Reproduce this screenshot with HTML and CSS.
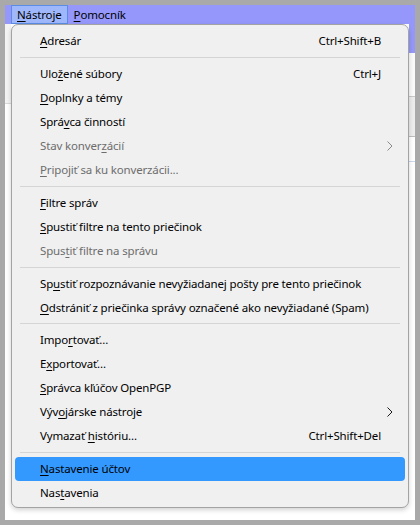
FILE: index.html
```html
<!DOCTYPE html>
<html lang="sk">
<head>
<meta charset="utf-8">
<title>Nástroje</title>
<link rel="stylesheet" href="styles.css">
</head>
<body>
<div class="window">
  <div class="menubar">
    <span class="mb-item open"><u>N</u>ástroje</span>
    <span class="mb-item"><u>P</u>omocník</span>
  </div>
  <div class="workspace">
    <div class="left-pane">
      <div class="lp-top"></div>
      <div class="lp-rest"></div>
    </div>
    <div class="right-pane">
      <div class="rp-head"></div>
      <div class="rp-row"></div>
      <div class="rp-box"></div>
      <div class="rp-line"></div>
      <div class="rp-rest"></div>
    </div>
  </div>

  <div class="menu">
    <div class="item"><span class="label"><u>A</u>dresár</span><span class="accel">Ctrl+Shift+B</span></div>
    <div class="sep"></div>
    <div class="item"><span class="label">Ulo<u>ž</u>ené súbory</span><span class="accel">Ctrl+J</span></div>
    <div class="item"><span class="label"><u>D</u>oplnky a témy</span></div>
    <div class="item"><span class="label">Sprá<u>v</u>ca činností</span></div>
    <div class="item disabled"><span class="label">Stav konver<u>z</u>ácií</span><svg class="arrow" width="6" height="10" viewBox="0 0 6 10"><polyline points="0.5,0.5 5,5 0.5,9.5" /></svg></div>
    <div class="item disabled"><span class="label"><u>P</u>ripojiť sa ku konverzácii...</span></div>
    <div class="sep"></div>
    <div class="item"><span class="label"><u>F</u>iltre správ</span></div>
    <div class="item"><span class="label"><u>S</u>pustiť filtre na tento priečinok</span></div>
    <div class="item disabled"><span class="label">Spus<u>t</u>iť filtre na správu</span></div>
    <div class="sep"></div>
    <div class="item"><span class="label">Sp<u>u</u>stiť rozpoznávanie nevyžiadanej pošty pre tento priečinok</span></div>
    <div class="item"><span class="label"><u>O</u>dstrániť z priečinka správy označené ako nevyžiadané (Spam)</span></div>
    <div class="sep"></div>
    <div class="item"><span class="label">Impo<u>r</u>tovať...</span></div>
    <div class="item"><span class="label">E<u>x</u>portovať...</span></div>
    <div class="item"><span class="label"><u>S</u>právca kľúčov OpenPGP</span></div>
    <div class="item"><span class="label">Výv<u>o</u>járske nástroje</span><svg class="arrow" width="6" height="10" viewBox="0 0 6 10"><polyline points="0.5,0.5 5,5 0.5,9.5" /></svg></div>
    <div class="item"><span class="label">Vymazať <u>h</u>istóriu...</span><span class="accel">Ctrl+Shift+Del</span></div>
    <div class="sep"></div>
    <div class="item active"><span class="label"><u>N</u>astavenie účtov</span></div>
    <div class="item"><span class="label">Nas<u>t</u>avenia</span></div>
  </div>
</div>
</body>
</html>
```

FILE: styles.css
```css
html, body {
  margin: 0;
  padding: 0;
}

body {
  background: #a9a9a9;
  font-family: "Noto Sans", "Segoe UI", sans-serif;
  font-size: 11.5px;
  letter-spacing: -0.15px;
  color: #000;
}

.window {
  position: relative;
  margin: 5px;
  width: 410px;
  height: 515px;
  background: #fff;
  display: flex;
  flex-direction: column;
  overflow: hidden;
}

.menubar {
  height: 19px;
  background: #9598fa;
  display: flex;
  align-items: stretch;
  padding-left: 6px;
  flex: none;
}

.mb-item {
  display: flex;
  align-items: center;
  padding: 0 5px;
  border: 1px solid transparent;
  line-height: 17px;
}

.mb-item.open {
  background: #9fb7fb;
  border-color: #5a8ee6;
}

.mb-item u,
.item u {
  text-decoration-thickness: 1px;
  text-underline-offset: 2px;
}

.workspace {
  flex: 1;
  display: flex;
}

.left-pane {
  width: 6px;
  display: flex;
  flex-direction: column;
}

.lp-top {
  height: 79px;
  background: #f3f3f3;
  border-bottom: 1px solid #dadada;
}

.lp-rest {
  flex: 1;
  background: #fff;
}

.right-pane {
  margin-left: auto;
  width: 6px;
  display: flex;
  flex-direction: column;
}

.rp-head {
  height: 29px;
  background: #9598fa;
}

.rp-row {
  height: 43px;
  background: #fafafa;
  border-bottom: 1px solid #c8c8c8;
}

.rp-box {
  height: 39px;
  background: #ececec;
  border-bottom: 1px solid #bdbdbd;
}

.rp-line {
  height: 24px;
  border-bottom: 1px solid #c9d9ee;
}

.rp-rest {
  flex: 1;
  background: #fff;
}

.menu {
  position: absolute;
  left: 6px;
  top: 19px;
  width: 398px;
  height: 484px;
  box-sizing: border-box;
  background: #f0f0f0;
  border: 1px solid #a3a3a3;
  border-radius: 7px;
  box-shadow: 0 2px 5px rgba(0, 0, 0, 0.18);
  padding: 4px 0 2px;
  display: flex;
  flex-direction: column;
}

.item {
  display: flex;
  align-items: center;
  margin: 0 3px;
  padding: 4px 12px 4px 25px;
  line-height: 15.95px;
  border-radius: 4px;
  white-space: nowrap;
}

.item .label {
  flex: 1;
}

.item .accel {
  margin-right: 12px;
}

.item.disabled {
  color: #6d6d6d;
}

.item.active {
  background: #3399ff;
}

.arrow {
  flex: none;
}

.arrow polyline {
  fill: none;
  stroke: #1a1a1a;
  stroke-width: 1;
}

.item.disabled .arrow polyline {
  stroke: #8a8a8a;
}

.sep {
  height: 1px;
  margin: 4px 8px 4px;
  background: #d5d5d5;
  flex: none;
}
```
